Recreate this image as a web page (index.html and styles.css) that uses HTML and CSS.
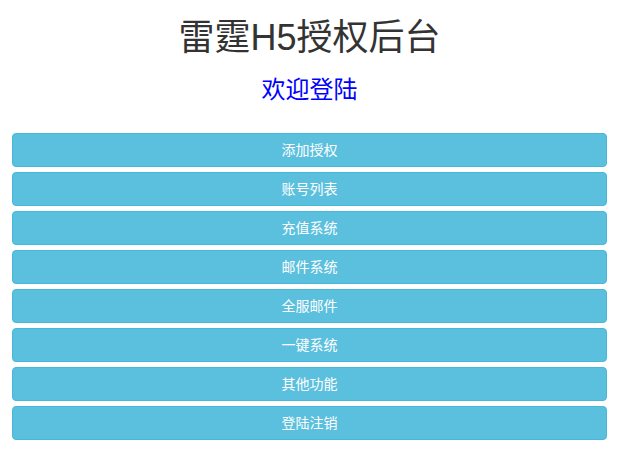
FILE: index.html
```html
<!DOCTYPE html>
<html lang="zh-CN">
<head>
<meta charset="utf-8">
<title>雷霆H5授权后台</title>
<link rel="stylesheet" href="styles.css">
</head>
<body>
<div class="page">
  <h1 class="title">雷霆H5授权后台</h1>
  <h3 class="subtitle">欢迎登陆</h3>
  <nav class="menu">
    <a class="btn" href="#">添加授权</a>
    <a class="btn" href="#">账号列表</a>
    <a class="btn" href="#">充值系统</a>
    <a class="btn" href="#">邮件系统</a>
    <a class="btn" href="#">全服邮件</a>
    <a class="btn" href="#">一键系统</a>
    <a class="btn" href="#">其他功能</a>
    <a class="btn" href="#">登陆注销</a>
  </nav>
</div>
</body>
</html>
```

FILE: styles.css
```css
html, body {
  margin: 0;
  padding: 0;
  background: #fff;
}
body {
  font-family: "Liberation Sans", "Noto Sans CJK SC", sans-serif;
  font-size: 14px;
  line-height: 1.42857;
  color: #333;
}
.page {
  padding: 0 15px 0 12px;
}
.title {
  margin: 18px 0 0;
  font-size: 36px;
  font-weight: 400;
  line-height: 40px;
  text-align: center;
  color: #333;
}
.subtitle {
  margin: 18px 0 0;
  font-size: 24px;
  font-weight: 400;
  line-height: 28px;
  text-align: center;
  color: #0000ff;
}
.menu {
  margin-top: 29px;
  display: flex;
  flex-direction: column;
  gap: 5px;
}
.btn {
  display: block;
  box-sizing: border-box;
  height: 34px;
  padding: 6px 12px;
  line-height: 20px;
  font-size: 14px;
  text-align: center;
  color: #fff;
  text-decoration: none;
  background: #5bc0de;
  border: 1px solid #46b8da;
  border-radius: 4px;
}
```
